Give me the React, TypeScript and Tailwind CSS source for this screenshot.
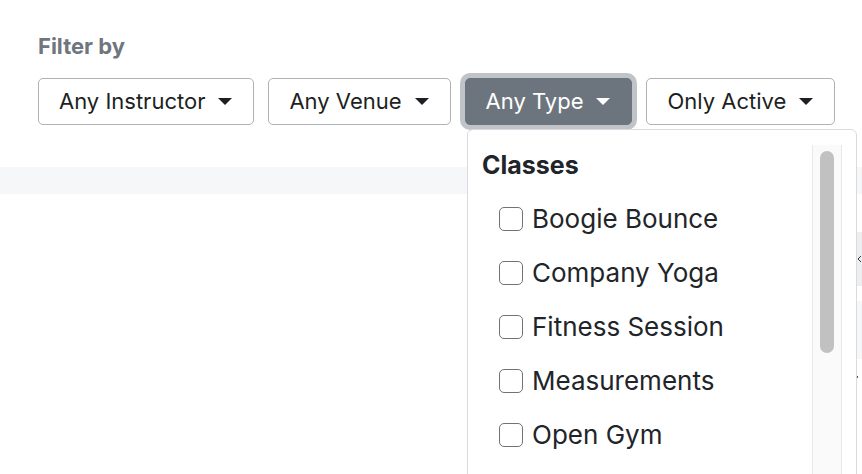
const classTypes = ['Boogie Bounce', 'Company Yoga', 'Fitness Session', 'Measurements', 'Open Gym'];

interface FilterButtonProps {
  label: string;
  active?: boolean;
}

function Caret() {
  return (
    <span className="ml-[13px] inline-block h-0 w-0 border-x-[7px] border-t-[7px] border-x-transparent border-t-current" />
  );
}

function FilterButton({ label, active = false }: FilterButtonProps) {
  if (active) {
    return (
      <button
        type="button"
        className="flex h-[47px] shrink-0 items-center whitespace-nowrap rounded-[5px] border-[1.5px] border-[#6c757d] bg-[#6c757d] pl-[20px] pr-[21px] text-[22px] text-white shadow-[0_0_0_5px_rgba(130,138,145,0.5)]"
      >
        {label}
        <Caret />
      </button>
    );
  }

  return (
    <button
      type="button"
      className="flex h-[47px] shrink-0 items-center whitespace-nowrap rounded-[5px] border-[1.5px] border-[#adb1b8] bg-white pl-[20px] pr-[21px] text-[22px] text-[#1d1f22]"
    >
      {label}
      <Caret />
    </button>
  );
}

export default function App() {
  return (
    <div className="relative h-[474px] w-full overflow-hidden bg-white font-['Inter','Liberation_Sans',sans-serif] text-[#212529]">
      <div className="px-[38px] pt-[33px]">
        <div className="text-[22px] font-bold leading-[26px] text-[#6f7680]">Filter by</div>
        <div className="mt-[19px] flex gap-[14px]">
          <FilterButton label="Any Instructor" />
          <FilterButton label="Any Venue" />
          <FilterButton label="Any Type" active />
          <FilterButton label="Only Active" />
        </div>
      </div>

      {/* content behind the menu */}
      <div className="mt-[42px] h-[27px] bg-[#f6f7f8]" />
      <div className="flex justify-end">
        <div className="w-[6px] overflow-hidden">
          <div className="mt-[38px] flex h-[54px] items-center bg-[#eceef0] pl-[1px] text-[#343a40]">
            <svg width="10" height="16" viewBox="0 0 10 16" fill="none" stroke="currentColor" strokeWidth="2">
              <path d="M8 2 2 8l6 6" />
            </svg>
          </div>
          <div className="mt-[15px] h-[58px] bg-[#f6f7f8]" />
          <div className="mt-[17px] h-[2px] w-[2px] bg-[#555]" />
        </div>
      </div>

      {/* type menu */}
      <div className="absolute left-[467px] top-[129px] flex h-[380px] w-[390px] rounded-[6px] border border-[#d9dbde] bg-white">
        <div className="flex-1 pl-[14px] pt-[18px]">
          <div className="text-[25px] font-bold leading-[34px]">Classes</div>
          <ul className="mt-[10px] pl-[17px]">
            {classTypes.map((name) => (
              <li key={name} className="flex h-[54px] items-center gap-[9px]">
                <span className="h-[24px] w-[24px] rounded-[5px] border-[1.5px] border-[#737373] bg-white" />
                <span className="text-[26px] leading-none">{name}</span>
              </li>
            ))}
          </ul>
        </div>
        <div className="mr-[14px] mt-[15px] w-[30px] border-x border-[#e8e8e8] bg-[#fafafa] px-[7px] pt-[6px]">
          <div className="h-[202px] rounded-full bg-[#c1c1c1]" />
        </div>
      </div>
    </div>
  );
}
